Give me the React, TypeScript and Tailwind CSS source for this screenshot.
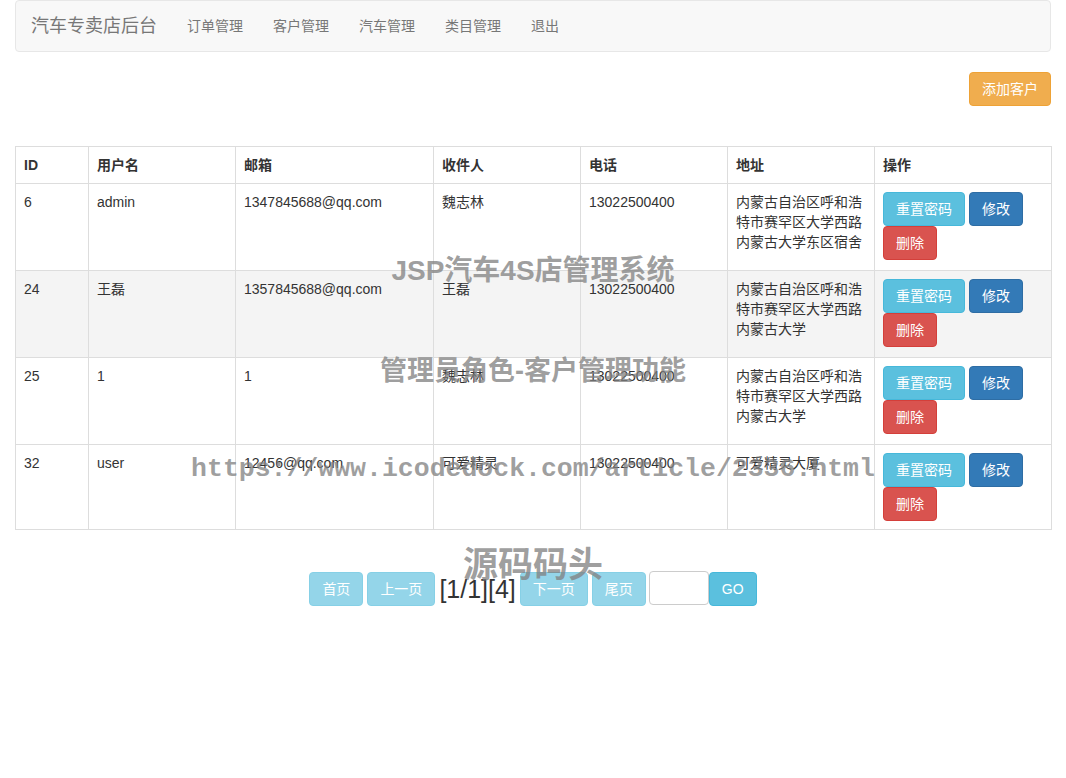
import React from "react";

interface Customer {
  id: number;
  username: string;
  email: string;
  receiver: string;
  phone: string;
  address: string[];
}

const customers: Customer[] = [
  {
    id: 6,
    username: "admin",
    email: "1347845688@qq.com",
    receiver: "魏志林",
    phone: "13022500400",
    address: ["内蒙古自治区呼和浩", "特市赛罕区大学西路", "内蒙古大学东区宿舍"],
  },
  {
    id: 24,
    username: "王磊",
    email: "1357845688@qq.com",
    receiver: "王磊",
    phone: "13022500400",
    address: ["内蒙古自治区呼和浩", "特市赛罕区大学西路", "内蒙古大学"],
  },
  {
    id: 25,
    username: "1",
    email: "1",
    receiver: "魏志林",
    phone: "13022500400",
    address: ["内蒙古自治区呼和浩", "特市赛罕区大学西路", "内蒙古大学"],
  },
  {
    id: 32,
    username: "user",
    email: "12456@qq.com",
    receiver: "可爱精灵",
    phone: "13022500400",
    address: ["可爱精灵大厦"],
  },
];

const navLinks = ["订单管理", "客户管理", "汽车管理", "类目管理", "退出"];

const btn = "inline-block rounded-[4px] border px-3 py-[6px] text-sm leading-5 text-white";

const App = () => {
  return (
    <div className="relative min-h-[778px] w-full bg-white px-[15px] font-['Liberation_Sans','Noto_Sans_CJK_SC',sans-serif] text-sm text-[#333]">
      {/* 顶部导航 */}
      <nav className="flex h-[52px] items-center rounded-[4px] border border-[#e7e7e7] bg-[#f8f8f8]">
        <span className="px-[15px] text-[18px] leading-5 text-[#777]">汽车专卖店后台</span>
        {navLinks.map((l) => (
          <a key={l} className="px-[15px] text-sm leading-5 text-[#777]">
            {l}
          </a>
        ))}
      </nav>

      <div className="mt-5 flex justify-end">
        <button className={`${btn} border-[#eea236] bg-[#f0ad4e]`}>添加客户</button>
      </div>

      <table className="mt-10 w-[1036px] table-fixed border-collapse">
        <colgroup>
          <col className="w-[73px]" />
          <col className="w-[147px]" />
          <col className="w-[198px]" />
          <col className="w-[147px]" />
          <col className="w-[147px]" />
          <col className="w-[147px]" />
          <col className="w-[177px]" />
        </colgroup>
        <thead>
          <tr>
            {["ID", "用户名", "邮箱", "收件人", "电话", "地址", "操作"].map((h) => (
              <th
                key={h}
                className="border border-[#ddd] p-2 text-left align-bottom font-bold leading-5"
              >
                {h}
              </th>
            ))}
          </tr>
        </thead>
        <tbody>
          {customers.map((c, i) => (
            <tr key={c.id} className={i === 1 ? "bg-[#f4f4f4]" : ""}>
              <td className="border border-[#ddd] p-2 align-top leading-5">{c.id}</td>
              <td className="border border-[#ddd] p-2 align-top leading-5">{c.username}</td>
              <td className="border border-[#ddd] p-2 align-top leading-5">{c.email}</td>
              <td className="border border-[#ddd] p-2 align-top leading-5">{c.receiver}</td>
              <td className="border border-[#ddd] p-2 align-top leading-5">{c.phone}</td>
              <td className="border border-[#ddd] p-2 align-top leading-5">
                {c.address.map((a) => (
                  <div key={a}>{a}</div>
                ))}
              </td>
              <td className={`border border-[#ddd] px-2 pt-2 align-top leading-5 ${i === 3 ? "pb-2" : "pb-[10px]"}`}>
                <div className="flex flex-wrap gap-x-1">
                  <button className={`${btn} border-[#46b8da] bg-[#5bc0de]`}>重置密码</button>
                  <button className={`${btn} border-[#2e6da4] bg-[#337ab7]`}>修改</button>
                  <button className={`${btn} border-[#d43f3a] bg-[#d9534f]`}>删除</button>
                </div>
              </td>
            </tr>
          ))}
        </tbody>
      </table>

      {/* 分页 */}
      <div className="mt-[42px] flex items-center justify-center">
        <button className={`${btn} mr-1 border-[#46b8da] bg-[#5bc0de] opacity-65`}>首页</button>
        <button className={`${btn} mr-1 border-[#46b8da] bg-[#5bc0de] opacity-65`}>上一页</button>
        <span className="mr-1 text-[25px] leading-[34px] text-[#333]">[1/1][4]</span>
        <button className={`${btn} mr-1 border-[#46b8da] bg-[#5bc0de] opacity-65`}>下一页</button>
        <button className={`${btn} mr-[3px] border-[#46b8da] bg-[#5bc0de] opacity-65`}>尾页</button>
        <input className="-mt-[2px] h-[34px] w-[60px] rounded-[4px] border border-[#ccc] bg-white" />
        <button className={`${btn} border-[#46b8da] bg-[#5bc0de] px-[12px]`}>GO</button>
      </div>

      {/* 水印 */}
      <div className="pointer-events-none absolute left-0 top-[256px] w-full text-center text-[28px] font-bold leading-[30px] text-[rgba(128,128,128,0.75)]">
        JSP汽车4S店管理系统
      </div>
      <div className="pointer-events-none absolute left-0 top-[356px] w-full text-center text-[27px] font-bold leading-[30px] text-[rgba(128,128,128,0.75)]">
        管理员角色-客户管理功能
      </div>
      <div className="pointer-events-none absolute left-0 top-[454px] w-full text-center font-['Liberation_Mono',monospace] text-[26.5px] font-bold leading-[30px] text-[rgba(128,128,128,0.75)]">
        https://www.icodedock.com/article/2336.html
      </div>
      <div className="pointer-events-none absolute left-0 top-[546px] w-full text-center text-[35px] font-bold leading-[38px] text-[rgba(128,128,128,0.75)]">
        源码码头
      </div>
    </div>
  );
};

export default App;
